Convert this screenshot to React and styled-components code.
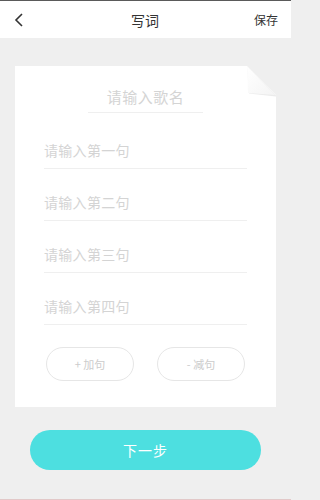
import React from "react";
import styled, { createGlobalStyle } from "styled-components";

const Global = createGlobalStyle`
  html, body { margin: 0; padding: 0; background: #efefef; }
  body { font-family: "Noto Sans CJK SC", "Noto Sans", sans-serif; }
  * { box-sizing: border-box; }
`;

const Page = styled.div`
  width: 291px;
  height: 500px;
  background: #efefef;
  display: flex;
  flex-direction: column;
  border-bottom: 1px solid #e2c8c8;
  overflow: hidden;
`;

const Header = styled.div`
  height: 38px;
  flex: none;
  background: #ffffff;
  border-top: 1px solid #5a5a5a;
  display: grid;
  grid-template-columns: 60px 1fr 60px;
  align-items: center;
  padding: 0 13px 0 12px;
`;

const BackBtn = styled.div`
  display: flex;
  align-items: center;
  height: 100%;
  padding-left: 2px;
`;

const Title = styled.div`
  text-align: center;
  font-size: 14px;
  color: #333;
  line-height: 20px;
`;

const SaveBtn = styled.div`
  text-align: right;
  font-size: 12px;
  color: #333;
  line-height: 18px;
`;

const Body = styled.div`
  flex: 1;
  display: flex;
  flex-direction: column;
  padding: 28px 15px 0 15px;
`;

const CardWrap = styled.div`
  position: relative;
`;

const Card = styled.div`
  background: #ffffff;
  padding: 20px 29px 26px 29px;
  display: flex;
  flex-direction: column;
  clip-path: polygon(0 0, calc(100% - 29px) 0, 100% 29px, 100% 100%, 0 100%);
`;

const Fold = styled.svg`
  position: absolute;
  top: 0;
  right: 0;
`;

const TitleField = styled.div`
  width: 115px;
  align-self: center;
  text-align: center;
  font-size: 15px;
  line-height: 22px;
  color: #d4d4d4;
  padding-bottom: 4px;
  border-bottom: 1px solid #efefef;
  letter-spacing: 0.5px;
`;

const LineList = styled.div`
  margin-top: 4px;
  display: flex;
  flex-direction: column;
`;

const LineRow = styled.div`
  padding: 23px 0 8px 0;
  font-size: 14px;
  line-height: 20px;
  color: #d4d4d4;
  border-bottom: 1px solid #efefef;
  letter-spacing: 0.3px;
`;

const BtnRow = styled.div`
  margin-top: 22px;
  display: flex;
  justify-content: space-between;
  padding: 0 2px;
`;

const PillBtn = styled.div`
  width: 88px;
  height: 34px;
  border-radius: 17px;
  border: 1px solid #e6e6e6;
  display: flex;
  align-items: center;
  justify-content: center;
  font-size: 11px;
  color: #cccccc;
`;

const NextBtn = styled.div`
  margin: 23px 15px 0 15px;
  height: 40px;
  border-radius: 20px;
  background: #4ddfe0;
  color: #ffffff;
  font-size: 14px;
  display: flex;
  align-items: center;
  justify-content: center;
  letter-spacing: 1px;
`;

const lines = ["请输入第一句", "请输入第二句", "请输入第三句", "请输入第四句"];

export default function App() {
  return (
    <>
      <Global />
      <Page>
        <Header>
          <BackBtn>
            <svg width="10" height="14" viewBox="0 0 10 14">
              <polyline points="8,1 2,7 8,13" fill="none" stroke="#333" strokeWidth="1.6" strokeLinejoin="miter" />
            </svg>
          </BackBtn>
          <Title>写词</Title>
          <SaveBtn>保存</SaveBtn>
        </Header>
        <Body>
          <CardWrap>
            <Card>
              <TitleField>请输入歌名</TitleField>
              <LineList>
                {lines.map((t) => (
                  <LineRow key={t}>{t}</LineRow>
                ))}
              </LineList>
              <BtnRow>
                <PillBtn>+ 加句</PillBtn>
                <PillBtn>- 减句</PillBtn>
              </BtnRow>
            </Card>
            <Fold width="30" height="31" viewBox="0 0 30 31">
              <defs>
                <linearGradient id="fg" x1="0" y1="0" x2="1" y2="1">
                  <stop offset="0" stopColor="#ffffff" />
                  <stop offset="1" stopColor="#f4f4f4" />
                </linearGradient>
              </defs>
              <polygon points="1,0 3,27.5 30,30.5 30,29.5" fill="#e6e6e6" opacity="0.8" />
              <polygon points="1,0 2,27 29,29" fill="url(#fg)" />
            </Fold>
          </CardWrap>
          <NextBtn>下一步</NextBtn>
        </Body>
      </Page>
    </>
  );
}
